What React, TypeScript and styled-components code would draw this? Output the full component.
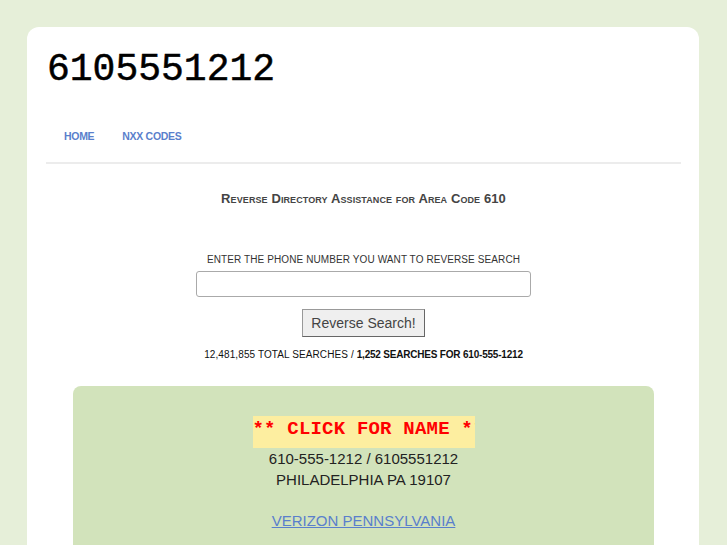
import styled, { createGlobalStyle } from "styled-components";

const GlobalStyle = createGlobalStyle`
  html, body {
    margin: 0;
    padding: 0;
    background: #e6efd9;
    font-family: "Liberation Sans", Arial, sans-serif;
  }
`;

const Page = styled.div`
  padding: 27px 28px 0 27px;
  height: 518px;
  overflow: hidden;
`;

const Card = styled.div`
  background: #fff;
  border-radius: 12px 12px 0 0;
  padding: 0 18px 0 19px;
  min-height: 518px;
`;

const Title = styled.h1`
  margin: 0;
  padding: 21px 0 0 1px;
  font-family: "Liberation Mono", "Courier New", monospace;
  font-weight: normal;
  font-size: 38px;
  line-height: 44px;
  color: #000;
  -webkit-text-stroke: 0.5px #000;
`;

const Nav = styled.nav`
  display: flex;
  gap: 28px;
  padding: 38px 0 0 18px;
  height: 32px;
  border-bottom: 2px solid #ececec;
`;

const NavLink = styled.a`
  font-size: 10.5px;
  font-weight: bold;
  color: #5a7fcc;
  text-decoration: none;
  letter-spacing: -0.3px;
`;

const Heading = styled.h2`
  margin: 27px 0 0 0;
  text-align: center;
  font-size: 13px;
  font-weight: bold;
  font-variant: small-caps;
  color: #444;
  letter-spacing: 0.1px;
`;

const SearchForm = styled.form`
  display: flex;
  flex-direction: column;
  align-items: center;
  margin-top: 47px;
`;

const Label = styled.label`
  font-size: 10px;
  color: #333;
  line-height: 13px;
  letter-spacing: 0.1px;
`;

const PhoneInput = styled.input`
  box-sizing: border-box;
  width: 335px;
  height: 26px;
  margin-top: 5px;
  border: 1px solid #aaa;
  border-radius: 3px;
  background: #fff;
`;

const SearchButton = styled.button`
  box-sizing: border-box;
  margin-top: 12px;
  width: 123px;
  height: 28px;
  font-family: "Liberation Sans", Arial, sans-serif;
  font-size: 14px;
  color: #444;
  background: #efefef;
  border: 1px solid #999;
  border-right-color: #666;
  border-bottom-color: #666;
`;

const Stats = styled.p`
  margin: 12px 0 0 0;
  text-align: center;
  font-size: 10px;
  color: #111;
  letter-spacing: 0.1px;

  b {
    letter-spacing: -0.2px;
  }
`;

const ResultBox = styled.div`
  margin: 26px 27px 0 27px;
  background: #d2e3bb;
  border-radius: 8px 8px 0 0;
  padding: 30px 0 20px 0;
  display: flex;
  flex-direction: column;
  align-items: center;
  min-height: 140px;
`;

const NameBadge = styled.a`
  display: block;
  width: 222px;
  height: 32px;
  overflow: hidden;
  white-space: nowrap;
  background: #fdeea0;
  color: #f00;
  font-family: "Liberation Mono", "Courier New", monospace;
  font-weight: bold;
  font-size: 19px;
  letter-spacing: 0.2px;
  line-height: 27px;
  text-decoration: none;
`;

const InfoLine = styled.div`
  font-size: 15px;
  line-height: 21px;
  color: #222;
`;

const CarrierLink = styled.a`
  margin-top: 20px;
  font-size: 15px;
  line-height: 21px;
  color: #5a7fcc;
  text-decoration: underline;
`;

export default function App() {
  return (
    <>
      <GlobalStyle />
      <Page>
        <Card>
          <Title>6105551212</Title>
          <Nav>
            <NavLink href="#">HOME</NavLink>
            <NavLink href="#">NXX CODES</NavLink>
          </Nav>
          <Heading>Reverse Directory Assistance for Area Code 610</Heading>
          <SearchForm onSubmit={(e) => e.preventDefault()}>
            <Label htmlFor="phone">ENTER THE PHONE NUMBER YOU WANT TO REVERSE SEARCH</Label>
            <PhoneInput id="phone" type="text" />
            <SearchButton type="submit">Reverse Search!</SearchButton>
          </SearchForm>
          <Stats>
            12,481,855 TOTAL SEARCHES / <b>1,252 SEARCHES FOR 610-555-1212</b>
          </Stats>
          <ResultBox>
            <NameBadge href="#">** CLICK FOR NAME **</NameBadge>
            <InfoLine>610-555-1212 / 6105551212</InfoLine>
            <InfoLine>PHILADELPHIA PA 19107</InfoLine>
            <CarrierLink href="#">VERIZON PENNSYLVANIA</CarrierLink>
          </ResultBox>
        </Card>
      </Page>
    </>
  );
}
